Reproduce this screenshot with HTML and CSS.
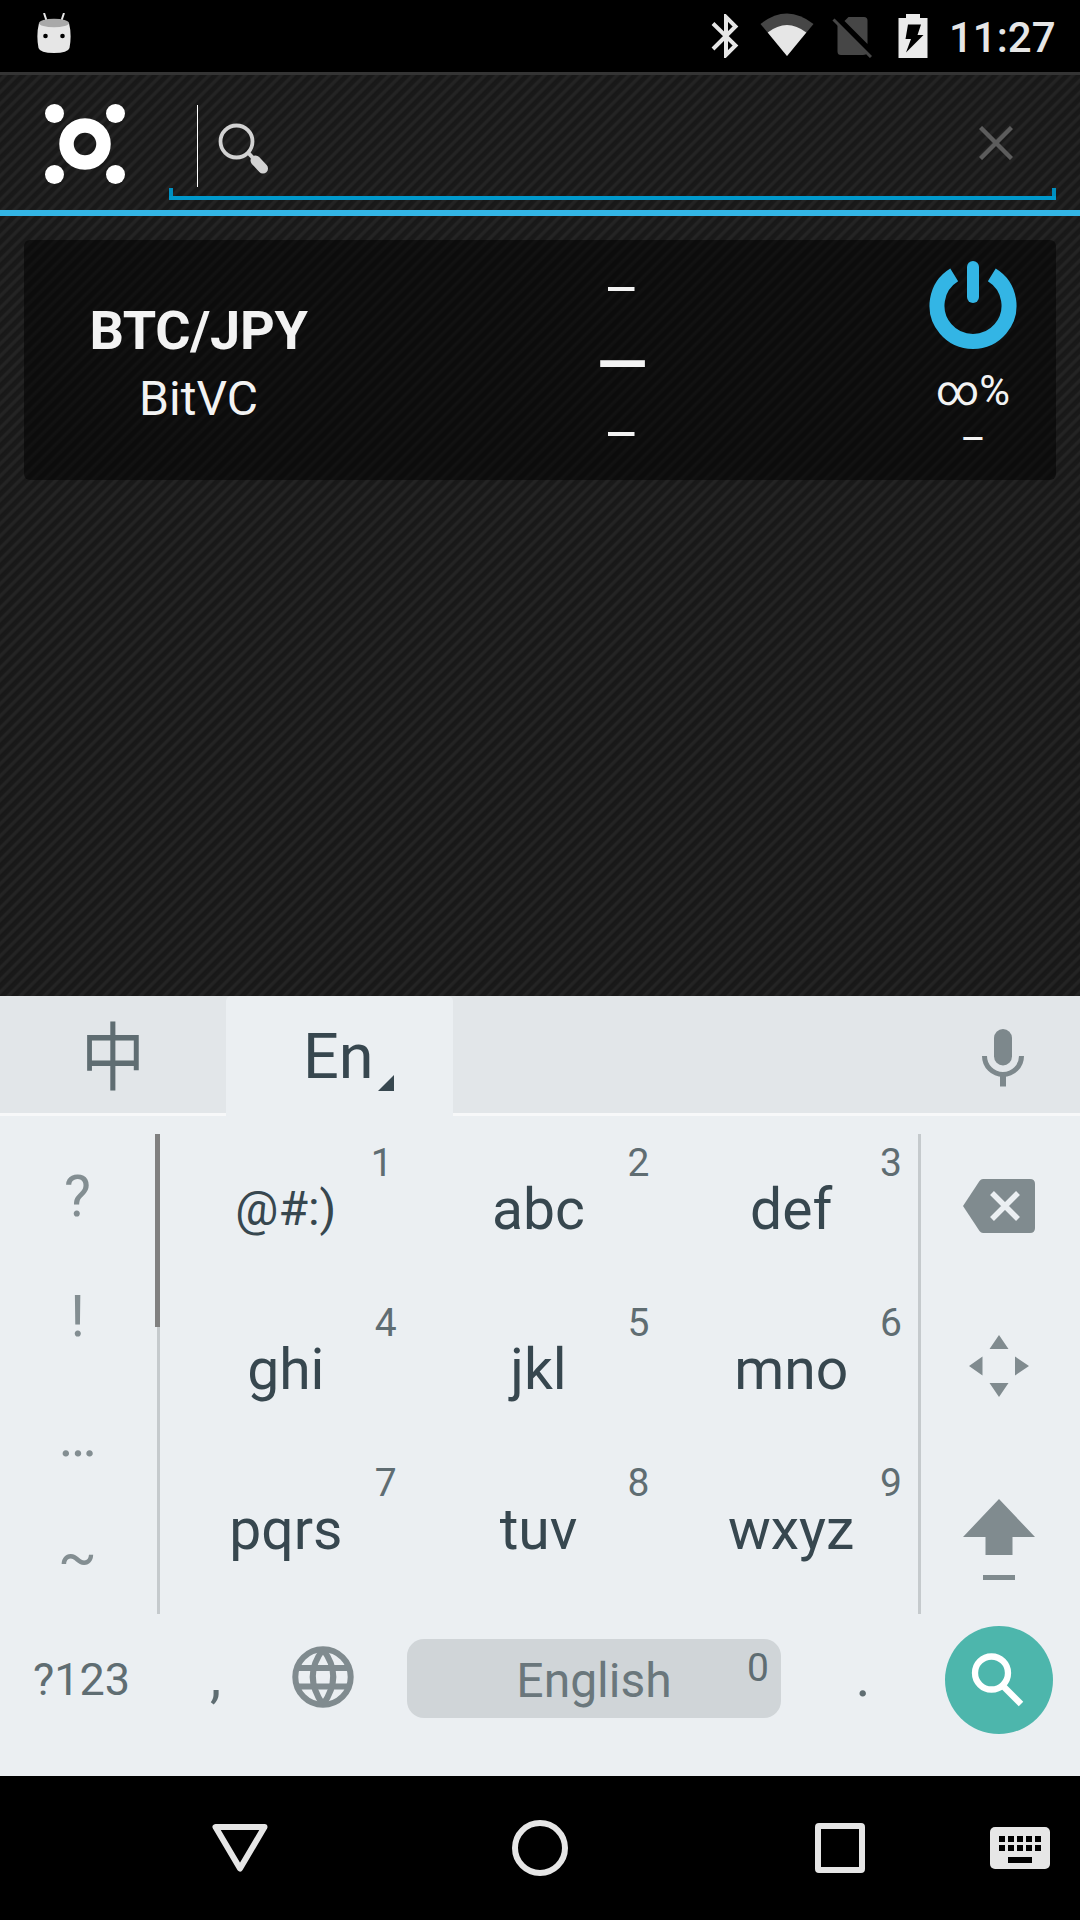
FILE: index.html
```html
<!DOCTYPE html>
<html lang="en">
<head>
<meta charset="utf-8">
<title>Ticker search</title>
<link rel="stylesheet" href="styles.css">
</head>
<body>
<div class="screen">
  <header class="status-bar">
    <svg class="robot" width="34" height="42" viewBox="0 0 34 42">
      <path d="M7 0l3 9M27 0l-3 9" stroke="#e6e6e6" stroke-width="2"/>
      <path d="M2 10Q17 16 32 10Q35 22 32.500 35Q31 40 17 40Q3 40 1.500 35Q-1 22 2 10z" fill="#e6e6e6"/>
      <ellipse cx="17" cy="10" rx="15" ry="4.300" fill="#a9a9a9"/>
      <circle cx="8.500" cy="23" r="2.300" fill="#000"/><circle cx="25.500" cy="23" r="2.300" fill="#000"/>
    </svg>
    <div class="indicators">
      <svg class="bluetooth" width="28" height="44" viewBox="0 0 28 44"><path d="M2 9.500L24.500 31.500L15 41V3L24.500 12.500L2 35" fill="none" stroke="#e6e6e6" stroke-width="4"/></svg>
      <svg class="wifi" width="54" height="44" viewBox="0 0 54 44"><path d="M.5 11Q27 -10 53.500 11L27 43z" fill="#464646"/><path d="M7.700 19.500Q27 4.500 46.300 19.500L27 43z" fill="#e6e6e6"/></svg>
      <svg class="no-sim" width="40" height="44" viewBox="0 0 40 44"><path d="M12.500 7L16.500 3H32Q35.500 3 35.500 6.500V30zM5.500 9L35 38.500Q34.500 41 31 41H9Q5.500 41 5.500 37.500z" fill="#464646"/><path d="M1.500 5.500L39 43" stroke="#464646" stroke-width="3"/></svg>
      <svg class="battery" width="30" height="44" viewBox="0 0 30 44"><path d="M8 0H22V4H29.500V44H.5V4H8z" fill="#ebebeb"/><path d="M10 10.500H23L19.500 21H25.500L8 38.500L13 25H7.500z" fill="#000"/></svg>
      <span class="clock">11:27</span>
    </div>
  </header>

  <div class="action-bar">
    <svg class="logo" width="80" height="80" viewBox="0 0 80 80"><circle cx="40" cy="40" r="18.500" fill="none" stroke="#fff" stroke-width="14.500"/><g fill="#fff"><circle cx="9.500" cy="9.500" r="9.500"/><circle cx="70.500" cy="9.500" r="9.500"/><circle cx="9.500" cy="70.500" r="9.500"/><circle cx="70.500" cy="70.500" r="9.500"/></g></svg>
    <div class="search-field">
      <span class="caret"></span>
      <svg class="glass" width="52" height="52" viewBox="0 0 52 52"><circle cx="18.500" cy="18.500" r="16" fill="none" stroke="#d2d2d2" stroke-width="3.800"/><path d="M30 29.500L35 35" stroke="#d2d2d2" stroke-width="4"/><path d="M37.500 37.500L45 45.500" stroke="#d2d2d2" stroke-width="10" stroke-linecap="round"/></svg>
      <svg class="clear" width="34" height="34" viewBox="0 0 34 34"><path d="M1.500 1.500L32.500 32.500M32.500 1.500L1.500 32.500" stroke="#5c5c5c" stroke-width="4.400"/></svg>
    </div>
  </div>

  <main class="content">
    <section class="card">
      <div class="pair"><strong>BTC/JPY</strong><span>BitVC</span></div>
      <div class="prices"><span>–</span><b>–</b><span>–</span></div>
      <div class="power">
        <svg width="88" height="90" viewBox="0 0 88 90"><path d="M25.200 14.900A36 36 0 1 0 62.800 14.900" fill="none" stroke="#33b5e5" stroke-width="15"/><path d="M44 7V37" stroke="#33b5e5" stroke-width="12" stroke-linecap="round"/></svg>
        <span class="percent">∞%</span><span class="change">–</span>
      </div>
    </section>
  </main>

  <section class="keyboard">
    <nav class="tabs">
      <div class="tab"><span class="zh">中</span></div>
      <div class="tab selected"><span class="en">En</span><svg class="corner" width="16" height="16" viewBox="0 0 16 16"><path d="M16 0V16H0z" fill="#37474f"/></svg></div>
      <svg class="mic" width="42" height="58" viewBox="0 0 42 58"><rect x="12" y="0" width="18" height="36.500" rx="9" fill="#7d888c"/><path d="M2.500 27A18.500 18.500 0 0 0 39.500 27" fill="none" stroke="#7d888c" stroke-width="5"/><path d="M21 45V57.500" stroke="#7d888c" stroke-width="6"/></svg>
    </nav>
    <div class="pad">
      <div class="symbols"><span>?</span><span>!</span><span>…</span><span>~</span><i class="thumb"></i></div>
      <div class="keys">
        <div class="key emo"><sup>1</sup><span>@#:)</span></div><div class="key"><sup>2</sup><span>abc</span></div><div class="key"><sup>3</sup><span>def</span></div>
        <div class="key"><sup>4</sup><span>ghi</span></div><div class="key"><sup>5</sup><span>jkl</span></div><div class="key"><sup>6</sup><span>mno</span></div>
        <div class="key"><sup>7</sup><span>pqrs</span></div><div class="key"><sup>8</sup><span>tuv</span></div><div class="key"><sup>9</sup><span>wxyz</span></div>
      </div>
      <div class="actions">
        <svg width="72" height="54" viewBox="0 0 72 54"><path d="M20 0H67Q72 0 72 5V49Q72 54 67 54H20Q18 54 16.500 52L0 27L16.500 2Q18 0 20 0z" fill="#808b8f"/><path d="M29 14L55 40M55 14L29 40" stroke="#ebeff2" stroke-width="5.500"/></svg>
        <svg width="60" height="62" viewBox="0 0 60 62"><path d="M30 0L39.500 14H20.500zM30 62L39.500 48H20.500zM0 31L13.500 21.500V40.500zM60 31L46 21.500V40.500z" fill="#808b8f"/></svg>
        <svg width="72" height="82" viewBox="0 0 72 82"><path d="M36 0L72 38H49.500V56H22.500V38H0z M20 76H52V81H20z" fill="#808b8f"/></svg>
      </div>
    </div>
    <div class="bottom-row">
      <span class="mode">?123</span>
      <span class="comma">,</span>
      <svg class="globe" width="62" height="62" viewBox="0 0 62 62"><g fill="none" stroke="#808b8f"><circle cx="31" cy="31" r="27.700" stroke-width="6"/><path d="M6 22H56M6 40.500H56" stroke-width="5.800"/><path d="M31 3.500Q10.500 30 31 58.500M31 3.500Q51.500 30 31 58.500" stroke-width="6"/></g></svg>
      <div class="space"><span>English</span><sup>0</sup></div>
      <span class="dot">.</span>
      <div class="go"><svg width="54" height="56" viewBox="0 0 54 56"><circle cx="20.500" cy="20" r="16.500" fill="none" stroke="#fff" stroke-width="6.300"/><path d="M33 34L50 51" stroke="#fff" stroke-width="6.300"/></svg></div>
    </div>
  </section>

  <footer class="nav-bar">
    <svg class="back" width="58" height="50" viewBox="0 0 58 50"><path d="M4.500 4H53.500L29 45.500z" fill="none" stroke="#e6e6e6" stroke-width="6" stroke-linejoin="round"/></svg>
    <svg class="home" width="56" height="56" viewBox="0 0 56 56"><circle cx="28" cy="28" r="25" fill="none" stroke="#e6e6e6" stroke-width="6"/></svg>
    <svg class="recent" width="50" height="50" viewBox="0 0 50 50"><rect x="3" y="3" width="44" height="44" rx="1" fill="none" stroke="#e6e6e6" stroke-width="6" stroke-linejoin="round"/></svg>
    <svg class="ime" width="60" height="42" viewBox="0 0 60 42"><rect width="60" height="42" rx="5" fill="#e6e6e6"/><path d="M9 12H51M9 21H51" stroke="#000" stroke-width="6" stroke-dasharray="6 3"/><path d="M18 33H42" stroke="#000" stroke-width="6"/></svg>
  </footer>
</div>
</body>
</html>
```

FILE: styles.css
```css
* { box-sizing: border-box; }
body { margin: 0; background: #000; }
svg { display: block; flex: none; }
.screen {
  width: 1080px; height: 1920px; overflow: hidden;
  display: flex; flex-direction: column;
  font-family: Roboto, "Noto Sans CJK SC", sans-serif;
  background: repeating-linear-gradient(135deg, #181818 0, #191919 3.4px, #242424 5px, #232323 6.8px, #181818 8.485px);
}
.status-bar { height: 72px; flex: none; background: #000; display: flex; justify-content: space-between; align-items: flex-start; padding: 13px 25px 0 37px; }
.indicators { display: flex; align-items: flex-start; }
.bluetooth { margin: 1px 21px 0 0; }
.wifi { margin: 0 18px 0 0; }
.no-sim { margin: 1px 26px 0 0; }
.battery { margin: 1px 21px 0 0; }
.clock { width: 106px; font-size: 42px; line-height: 48px; margin-top: 1px; font-weight: 500; color: #e6e6e6; white-space: nowrap; }

.action-bar { height: 144px; flex: none; border-top: 3px solid #343434; border-bottom: 6px solid #33b5e5; display: flex; padding: 29px 24px 10px 45px; }
.logo { margin-right: 44px; }
.search-field {
  flex: 1; height: 96px; display: flex;
  background: linear-gradient(#0099cc, #0099cc) bottom / 100% 4px no-repeat, linear-gradient(#008fc0, #008fc0) left bottom / 4px 12px no-repeat, linear-gradient(#008fc0, #008fc0) right bottom / 4px 12px no-repeat;
}
.caret { width: 1px; height: 82px; margin: 1px 0 0 28px; background: #fff; }
.glass { margin: 19px 0 0 20px; }
.clear { margin: 22px 43px 0 auto; }

.content { flex: 1; padding: 24px; }
.card { height: 240px; border-radius: 6px; background: rgba(0, 0, 0, .5); display: flex; color: #f3f3f3; }
.pair { width: 349px; display: flex; flex-direction: column; align-items: center; padding-top: 60px; }
.pair strong { font-size: 54px; line-height: 62px; letter-spacing: -.3px; }
.pair span { font-size: 48px; line-height: 56px; margin-top: 9px; }
.prices { width: 497px; display: flex; flex-direction: column; align-items: center; }
.prices span { font-size: 54px; line-height: 64px; margin-top: 18px; }
.prices b { font-size: 62px; line-height: 72px; margin-top: 6px; transform: scaleX(1.42); }
.prices b + span { margin-top: 3px; }
.power { width: 166px; margin-left: 20px; display: flex; flex-direction: column; align-items: center; padding-top: 20px; }
.percent { font-size: 42px; line-height: 48px; margin-top: 17px; }
.change { font-size: 39px; line-height: 42px; margin-top: 3px; }

.keyboard { height: 780px; flex: none; background: #ebeff2; display: flex; flex-direction: column; }
.tabs { height: 120px; display: flex; background: linear-gradient(#e2e6e9 117px, #f7f8f9 117px); }
.tab { width: 226px; height: 120px; display: flex; justify-content: center; }
.tab.selected { width: 227px; background: #ebeff2; border-radius: 5px 5px 0 0; justify-content: flex-start; padding-left: 77px; }
.zh { font-family: "Noto Sans CJK SC", sans-serif; font-size: 64px; line-height: 96px; margin-top: 9px; color: #5f6d72; transform: scaleY(1.15); }
.en { font-size: 63px; line-height: 74px; margin-top: 24px; color: #37474f; }
.corner { margin: 79px 0 0 4px; }
.mic { margin: 33px 56px 0 auto; }

.pad { height: 480px; margin-top: 18px; display: flex; }
.symbols { width: 160px; border-right: 3px solid #c5cacd; padding-right: 2px; display: grid; grid-template-rows: repeat(4, 120px); justify-items: center; color: #838e92; font-size: 57px; line-height: 66px; position: relative; }
.symbols span { padding-top: 30px; }
.thumb { position: absolute; right: -3px; top: 0; width: 5px; height: 193px; background: #808080; }
.keys { flex: 1; display: grid; grid-template-columns: repeat(3, 1fr); grid-template-rows: repeat(3, 160px); }
.key { display: grid; grid-template-rows: 42px 66px; }
.key sup { justify-self: end; font-size: 39px; line-height: 46px; padding: 6px 16px 0 0; color: #5f6d72; }
.key span { justify-self: center; font-size: 57px; line-height: 66px; margin: 1px 1px 0 0; color: #37474f; }
.emo sup { padding-right: 20px; }
.emo span { font-size: 48px; margin-top: 0; }
.actions { width: 162px; border-left: 3px solid #c5cacd; display: flex; flex-direction: column; align-items: center; padding: 45px 3px 0 0; gap: 102px; }

.bottom-row { flex: 1; display: flex; color: #5f6d72; align-items: flex-start; }
.mode { width: 160px; padding-left: 33px; font-size: 45px; line-height: 54px; margin-top: 39px; }
.comma { width: 111px; text-align: center; font-size: 57px; line-height: 66px; margin-top: 30px; }
.globe { margin: 32px 53px 0 21px; }
.space { width: 374px; height: 79px; margin-top: 25px; border-radius: 17px; background: #d0d5d8; position: relative; text-align: center; }
.space span { font-size: 48px; line-height: 56px; display: block; margin-top: 14px; color: #6a777c; }
.space sup { position: absolute; right: 12px; top: 6px; font-size: 39px; line-height: 46px; }
.dot { width: 164px; text-align: center; font-size: 57px; line-height: 66px; margin-top: 30px; }
.go { width: 108px; height: 108px; margin-top: 12px; border-radius: 50%; background: #4db6ac; padding: 27px 0 0 26px; }

.nav-bar { height: 144px; flex: none; background: #000; display: flex; align-items: center; }
.back { margin-left: 211px; }
.home { margin-left: 243px; }
.recent { margin-left: 247px; }
.ime { margin-left: 125px; }
```
